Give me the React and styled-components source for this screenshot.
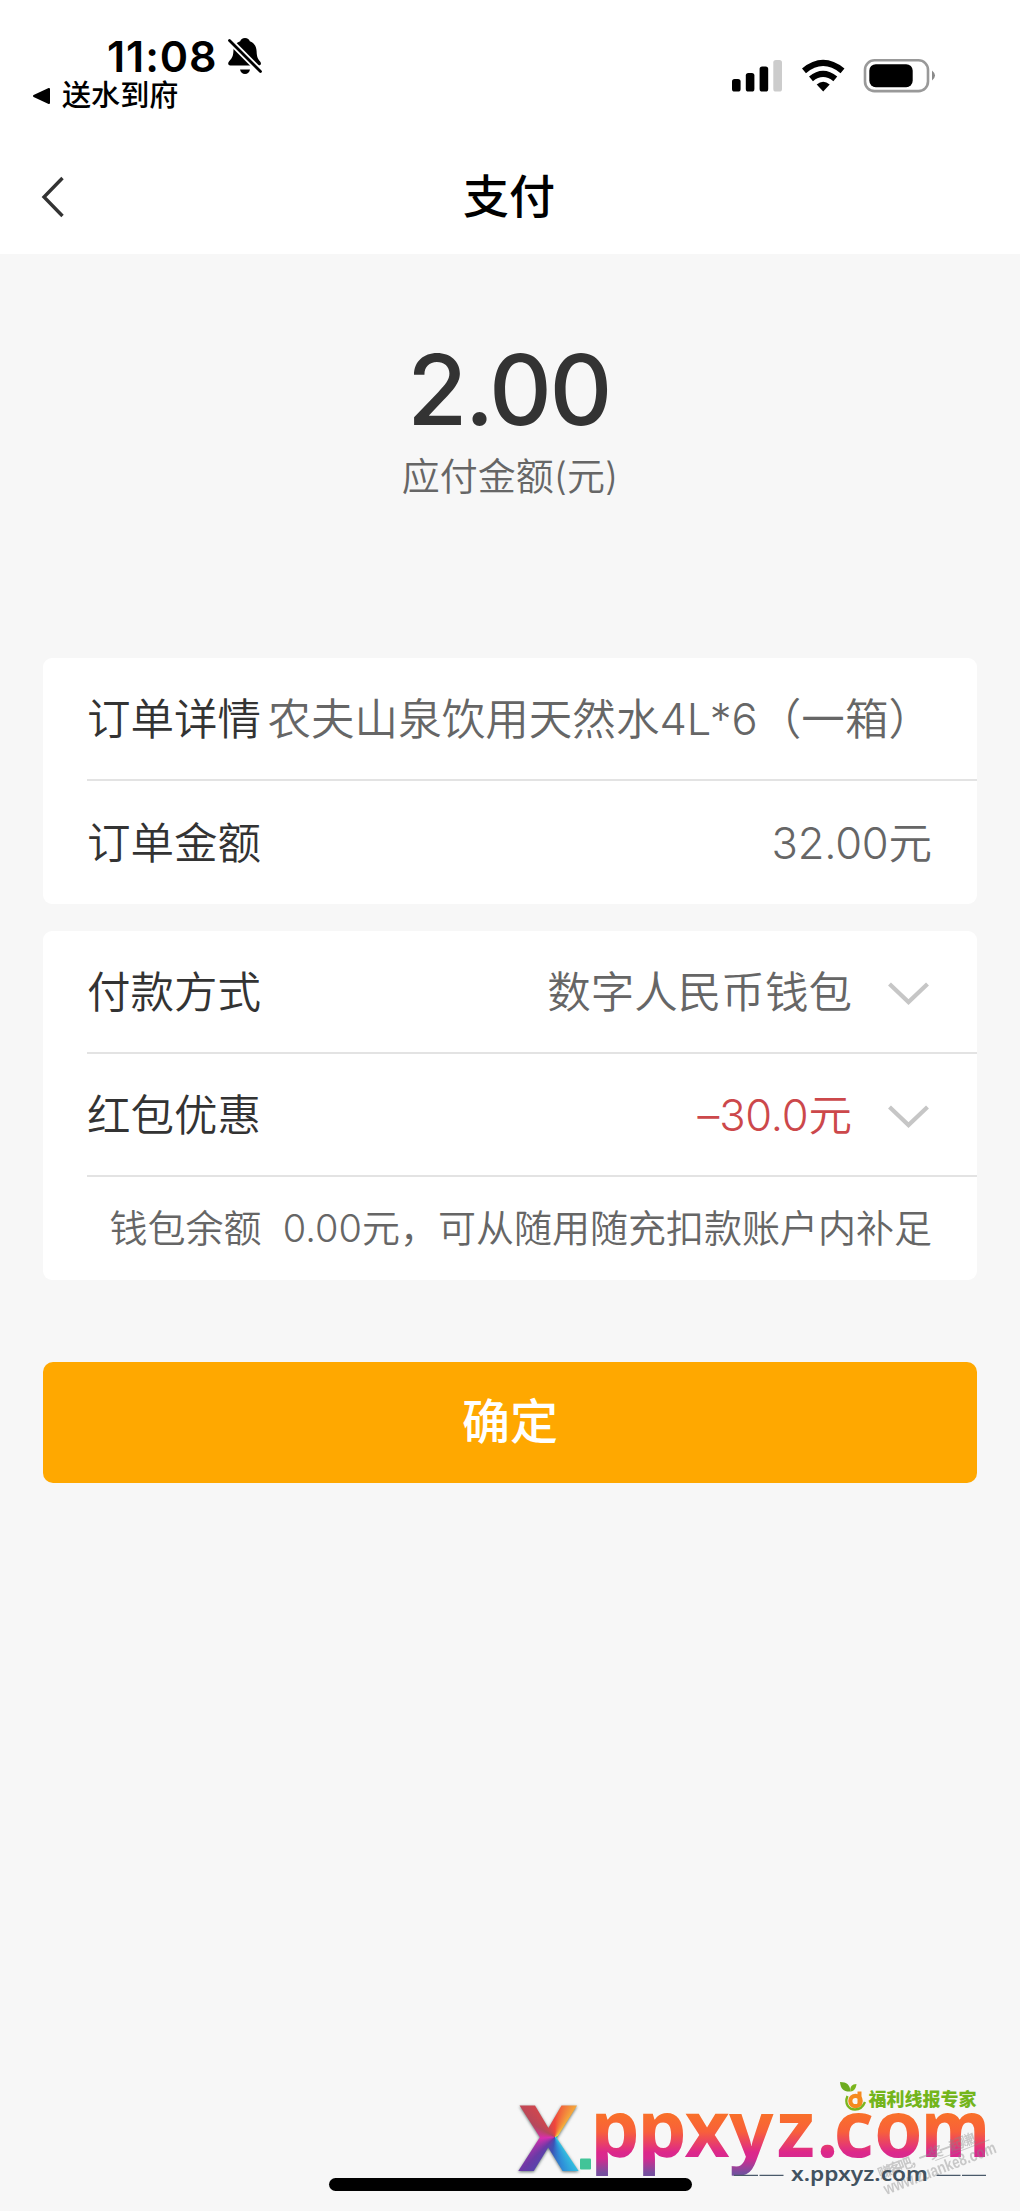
import styled, { createGlobalStyle } from "styled-components";

const GlobalStyle = createGlobalStyle`
    * { box-sizing: border-box; }
    body {
        margin: 0;
        background: #f7f7f7;
    }
`;

// Rows of the order card
const orderRows = [
    { label: "订单详情", value: "农夫山泉饮用天然水4L*6（一箱）" },
    { label: "订单金额", value: "32.00", unit: "元" },
];

const payRows = [
    { label: "付款方式", value: "数字人民币钱包" },
    { label: "红包优惠", value: "–30.0", unit: "元", red: true },
];

const ChevronDown = () => (
    <Chevron width="41" height="24" viewBox="0 0 41 24">
        <path d="M1.5 2 L20.5 20 L39.5 2" fill="none" stroke="#c6c6c6" strokeWidth="4.2" />
    </Chevron>
);

const BellOff = () => (
    <svg width="36" height="38" viewBox="0 0 36 38">
        <path
            d="M18 1c2.600 0 4.300 1.500 4.800 3.300 4.500 1.600 6.600 5.200 6.800 10 .2 5.500 1.200 7.800 3.500 10.200 1.300 1.400 1.300 4-1.300 4H3.300c-2.500 0-2.600-2.600-1.300-4 2.900-3 4.200-5.200 4.400-10.200.2-4.800 2.300-8.400 6.800-10C13.700 2.500 15.400 1 18 1Z"
            fill="#000"
        />
        <path d="M13 32.500h10c-.4 2.700-2.400 4.500-5 4.500s-4.600-1.800-5-4.500Z" fill="#000" />
        <path d="M-1 0 L36 37" stroke="#fff" strokeWidth="6.500" />
        <path d="M2.500 3.500 L33.500 34.500" stroke="#000" strokeWidth="2.800" strokeLinecap="round" />
    </svg>
);

const StatusIcons = () => (
    <svg width="205" height="36" viewBox="0 0 205 36">
        <rect x="0" y="21" width="8.600" height="12.500" rx="2.600" />
        <rect x="13.800" y="15" width="8.600" height="18.500" rx="2.600" />
        <rect x="27.600" y="8.500" width="8.600" height="25" rx="2.600" />
        <rect x="41.300" y="2" width="8.700" height="31.500" rx="2.600" fill="#ccc" />
        <g fill="none" stroke="#000" strokeWidth="6.200">
            <path d="M72 12.800 Q91 -3 110.500 12.800" />
            <path d="M79 20.800 Q91 11 103.300 20.800" />
        </g>
        <path d="M84.700 26.500 Q91.200 21 97.700 26.500 L91.200 33.500Z" />
        <rect x="133" y="2.300" width="63" height="30.800" rx="9.500" fill="none" stroke="#999" strokeWidth="2.600" />
        <rect x="137.300" y="6.200" width="43.400" height="23" rx="6.500" />
        <path d="M200 12.500 Q206 17.500 200 22.500Z" fill="#8a8a8a" />
    </svg>
);

const SiteMark = () => (
    <MarkLayer>
        <BigX>X</BigX>
        <MarkArt width="520" height="151" viewBox="500 2060 520 151">
            <defs>
                <linearGradient id="sunset" gradientUnits="userSpaceOnUse" x1="0" y1="2114" x2="0" y2="2173">
                    <stop offset="0" stopColor="#f9702a" />
                    <stop offset="0.3" stopColor="#f8603a" />
                    <stop offset="0.65" stopColor="#dd278b" />
                    <stop offset="0.75" stopColor="#d52a8f" />
                    <stop offset="1" stopColor="#76509f" />
                </linearGradient>
            </defs>
            <rect x="580" y="2158.500" width="11" height="11" rx="1" fill="#42c498" />
            <Domain x="590.500 637.500 684.500 729 776.500 816.500 833.500 874" y="2157">ppxyz.co</Domain>
            <Domain x="921" y="2157" textLength="69" lengthAdjust="spacingAndGlyphs">m</Domain>
            <Stamp transform="rotate(-21 883 2178)">
                <text x="880" y="2178" textLength="112">赚客吧，一奖一起赚！</text>
                <rect x="938" y="2180" width="58" height="1" />
                <text x="880" y="2195" fontSize="17" textLength="119" lengthAdjust="spacingAndGlyphs">www.zuanke8.com</text>
            </Stamp>
            <g stroke="#4a5a6a" strokeWidth="1.300">
                <path d="M734 2175.300h24M759.500 2175.300h24M936.500 2175.300h24M962 2175.300h24" />
            </g>
            <SmallDomain x="791" y="2180.500" textLength="137" lengthAdjust="spacingAndGlyphs">x.ppxyz.com</SmallDomain>
            <circle cx="855.500" cy="2101" r="5.200" fill="none" stroke="#f58a1f" strokeWidth="4.200" />
            <path d="M859.500 2091.500v14" stroke="#f58a1f" strokeWidth="4" />
            <path d="M847.500 2096 C844 2104 849 2109.500 855 2109.500 C860 2109.500 863 2107 865 2102" fill="none" stroke="#7ab51d" strokeWidth="2.300" />
            <path d="M840 2082 C847 2082 850 2085 850.500 2091.500 C844 2092 840.500 2089 840 2082Z" fill="#6cab1f" />
            <path d="M850.500 2091.500 C849.500 2087 852 2084 856.500 2084 C856 2088 854.500 2091 850.500 2091.500Z" fill="#7ab51d" />
            <Expert x="868.500" y="2106.300" textLength="108">福利线报专家</Expert>
        </MarkArt>
    </MarkLayer>
);

const App = () => {
    return (
        <Screen>
            <GlobalStyle />
            <StatusBar>
                <div>
                    <Clock>11:08<BellOff /></Clock>
                    <BackToApp>
                        <svg width="19" height="18" viewBox="0 0 19 18">
                            <path d="M2 9 L17 2 V16Z" stroke="#000" strokeWidth="2" strokeLinejoin="round" />
                        </svg>
                        送水到府
                    </BackToApp>
                </div>
                <StatusIcons />
            </StatusBar>
            <NavBar>
                <svg width="24" height="42" viewBox="0 0 24 42">
                    <path d="M21.500 2 L3 21 L21.500 40" fill="none" stroke="#333" strokeWidth="3.400" />
                </svg>
                <Title>支付</Title>
            </NavBar>

            <Total>
                <Amount>2.00</Amount>
                <AmountLabel>应付金额(元)</AmountLabel>
            </Total>

            <Card>
                {orderRows.map((row) => (
                    <Row key={row.label}>
                        <Label>{row.label}</Label>
                        <Value $money={row.unit}>{row.value}<span>{row.unit}</span></Value>
                    </Row>
                ))}
            </Card>

            <Card>
                {payRows.map((row) => (
                    <Row key={row.label}>
                        <Label>{row.label}</Label>
                        <Value $red={row.red} $money={row.unit}>{row.value}<span>{row.unit}</span></Value>
                        <ChevronDown />
                    </Row>
                ))}
                <Note>钱包余额&nbsp; 0.00元，可从随用随充扣款账户内补足</Note>
            </Card>

            <Confirm>确定</Confirm>

            <HomeIndicator />
            <SiteMark />
        </Screen>
    );
};

export default App;

const Screen = styled.div`
    position: relative;
    width: 1020px;
    height: 2211px;
    overflow: hidden;
    background: #f7f7f7;
    font-family: Inter, "Noto Sans CJK SC", sans-serif;
    color: #333;
`;

const StatusBar = styled.div`
    display: flex;
    justify-content: space-between;
    align-items: flex-start;
    height: 140px;
    padding: 35px 83px 0 32px;
    background: #fff;

    > svg {
        margin-top: 23px;
    }
`;
const Clock = styled.div`
    display: flex;
    align-items: center;
    gap: 10px;
    height: 41px;
    padding-left: 75px;
    font-size: 43px;
    font-weight: 600;
    letter-spacing: 0.9px;
    color: #000;
`;
const BackToApp = styled.div`
    display: flex;
    align-items: center;
    gap: 11px;
    height: 40px;
    font-size: 29.100px;
    line-height: 40px;
    font-weight: 500;
    color: #000;
`;

const NavBar = styled.div`
    display: grid;
    grid-template-columns: 24px 1fr 24px;
    align-items: center;
    height: 114px;
    padding: 0 43px 0 41px;
    background: #fff;
`;
const Title = styled.h1`
    margin: 0;
    padding-bottom: 2px;
    font-size: 46px;
    line-height: 60px;
    font-weight: 500;
    text-align: center;
    color: #000;
`;

const Total = styled.div`
    display: flex;
    flex-direction: column;
    align-items: center;
    height: 404px;
    padding-top: 86px;
`;
const Amount = styled.div`
    padding-right: 3px;
    font-size: 97.500px;
    line-height: 100px;
    font-weight: 500;
    letter-spacing: -2.600px;
`;
const AmountLabel = styled.div`
    margin-top: 11px;
    font-size: 38px;
    line-height: 50px;
    font-weight: 350;
    color: #666;
`;

const Card = styled.div`
    margin: 0 43px 27px;
    padding-left: 44px;
    background: #fff;
    border-radius: 9px;
`;
const Row = styled.div`
    display: flex;
    align-items: center;
    justify-content: space-between;
    height: 123px;
    padding-right: 45px;
    border-bottom: 2px solid #e3e3e3;
    font-size: 43.500px;
    line-height: 60px;
    font-weight: 350;
    white-space: nowrap;

    &:last-child {
        border-bottom: none;
    }
`;
const Label = styled.span`
    color: #333;
`;
const Value = styled.span`
    margin-left: auto;
    letter-spacing: ${(props) => (props.$money ? "-0.2px" : "0.05px")};
    color: ${(props) => (props.$red ? "#cc484b" : "#666")};

    > span {
        letter-spacing: 0;
    }
`;
const Chevron = styled.svg`
    margin: 4px 3px 0 36px;
`;
const Note = styled.div`
    height: 103px;
    padding-right: 45px;
    font-size: 38px;
    line-height: 102px;
    font-weight: 350;
    text-align: right;
    white-space: nowrap;
    color: #666;
`;

const Confirm = styled.button`
    display: block;
    width: 934px;
    height: 121px;
    margin: 82px 43px 0;
    padding: 0 0 9px;
    border: none;
    border-radius: 10px;
    background: #ffa800;
    font-family: inherit;
    font-size: 48px;
    font-weight: 500;
    color: #fff;
`;

const HomeIndicator = styled.div`
    position: absolute;
    left: 329px;
    bottom: 20px;
    width: 363px;
    height: 13px;
    border-radius: 7px;
    background: #000;
`;

const MarkLayer = styled.div`
    position: absolute;
    right: 0;
    bottom: 0;
    width: 520px;
    height: 151px;
`;
const BigX = styled.span`
    position: absolute;
    left: 18px;
    top: 36px;
    font: 700 91px/80px "Noto Sans", sans-serif;
    color: transparent;
    background: conic-gradient(from 0deg at 37px 41px, #f0453c, #f4b53c 40deg, #e9d84a 60deg, #2fa39b 90deg, #35e0e6 130deg, #2e8fd8 165deg, #3b53b5 190deg, #6a3aa6 225deg, #d92fae 265deg, #b5485c 300deg, #f0453c);
    background-clip: text;
    filter: drop-shadow(0 1px 1.500px rgba(40, 60, 60, 0.7));
`;
const MarkArt = styled.svg`
    position: absolute;
    inset: 0;
`;
const Domain = styled.text`
    font: 700 78px "Noto Sans", sans-serif;
    fill: url(#sunset);
`;
const SmallDomain = styled.text`
    font: 600 19px "Noto Sans", sans-serif;
    fill: #42525f;
`;
const Expert = styled.text`
    font: 900 18px "Noto Sans CJK SC", sans-serif;
    fill: #74b51c;
`;
const Stamp = styled.g`
    font: 700 14px "Liberation Sans", "Noto Sans CJK SC", sans-serif;
    fill: #888;
    opacity: 0.42;
`;
